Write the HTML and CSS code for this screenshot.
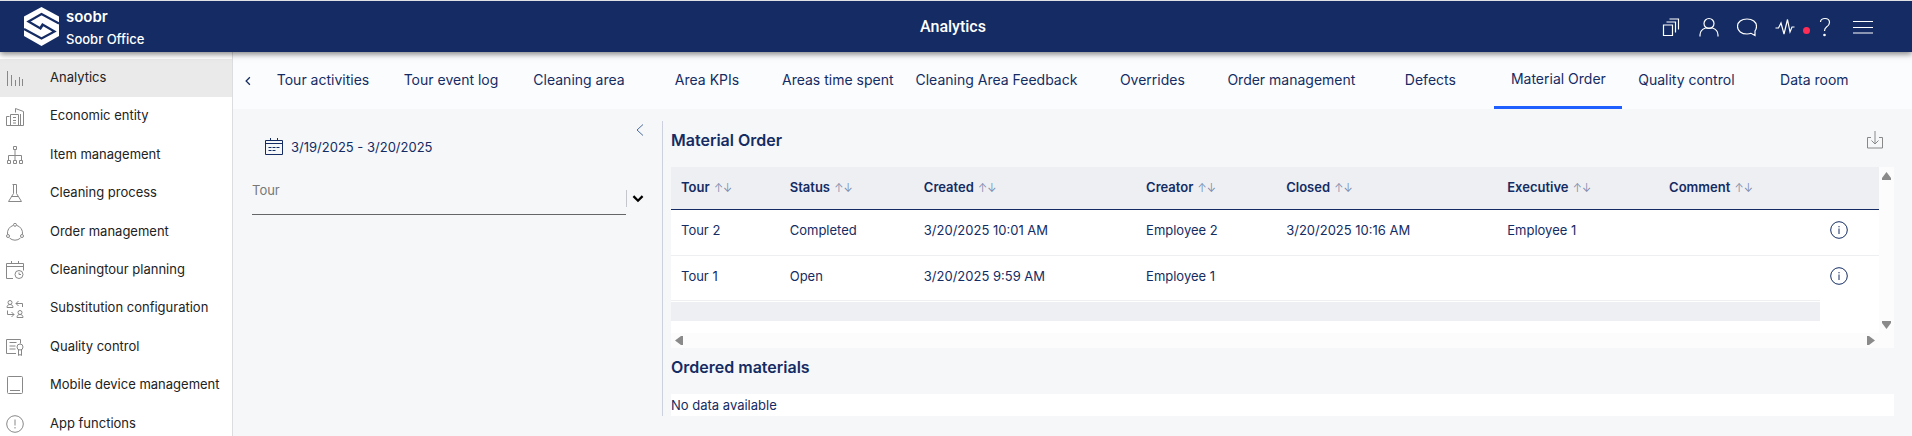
FILE: index.html
```
<!DOCTYPE html>
<html lang="en">
<head>
  <meta charset="UTF-8" />
  <meta name="viewport" content="width=device-width, initial-scale=1.0"/>
  <title>Soobr Office - Analytics</title>
  <link rel="stylesheet" href="styles.css">
</head>
<body>
  <header class="topbar">
    <div class="brand">
      <svg class="logo" viewBox="0 0 35 39">
        <path fill="#fff" d="M17.5 0 35 9.5v19.5L17.5 39 0 29V9.500z"/>
        <path fill="none" stroke="#142c63" stroke-width="2.200" d="M35 16.500 17.500 7 4.500 14.500 16.500 21.500 18.500 18.500M0 22 17.500 31.500 30.500 24.500 18.500 17.500 16.500 20.500"/>
      </svg>
      <div class="brand-text">
        <strong>soobr</strong>
        <span>Soobr Office</span>
      </div>
    </div>
    <h1>Analytics</h1>
    <div class="actions">
      <button aria-label="Windows">
        <svg viewBox="0 0 20 20"><path d="M2.500 8h9v10.500h-9zM5.500 5h9v10.500M8.500 2h9v10.500"/></svg>
      </button>
      <button aria-label="Profile">
        <svg viewBox="0 0 20 20"><circle cx="10" cy="6.500" r="5"/><path d="M1 19.500v-1.500c0-3.500 2.500-6 5.500-7h7c3 1 5.500 3.500 5.500 7v1.500"/></svg>
      </button>
      <button aria-label="Messages">
        <svg viewBox="0 0 20 20"><path d="M18 18.500v-4.500c1-1.500 1.500-2.500 1.500-4.500 0-4.500-4-7.500-9.500-7.500S.500 5 .500 9.500 4.500 17 10 17c1.500 0 3-.300 4-.700z"/></svg>
      </button>
      <button class="activity" aria-label="Activity">
        <svg viewBox="0 0 20 20"><path d="M.500 11h3L6 6l3 11 3.500-14.500L15 15l2-5h2.500"/></svg>
        <span class="dot"></span>
      </button>
      <button class="help" aria-label="Help">
        <svg viewBox="0 0 20 20"><path d="M5.500 5C5.500 3 7.500 1.500 10 1.500s4.500 1.500 4.500 4-1.500 3.500-3 4.500-2 2-2 4"/><circle class="fill" cx="9.500" cy="18" r="1.300"/></svg>
      </button>
      <button class="menu" aria-label="Menu">
        <svg viewBox="0 0 20 20"><path d="M0 4.500h20M0 10.500h20M0 16h20"/></svg>
      </button>
    </div>
  </header>

  <div class="layout">
    <nav class="sidebar">
      <a class="active" href="#">
        <svg viewBox="0 0 18 18"><path d="M1.500 2v15M5.500 6v11M9.500 11v6M13.500 8v9M16.500 10v7"/></svg>
        <span>Analytics</span>
      </a>
      <a href="#">
        <svg viewBox="0 0 18 18"><path d="M.500 17.500v-9h3M4.500 17.500V6.500h8v11M9.500 4.500V.500l8 3v14H.500M14.500 6v11.500M7 9.500h3M7 12.500h3M7 15h3"/></svg>
        <span>Economic entity</span>
      </a>
      <a href="#">
        <svg viewBox="0 0 18 18"><path d="M7.500.500h3v3h-3zM9 3.500v11M2.500 14V9.500h13V14M1.500 14.500h3v3h-3zM7.500 14.500h3v3h-3zM13.500 14.500h3v3h-3z"/></svg>
        <span>Item management</span>
      </a>
      <a href="#">
        <svg viewBox="0 0 18 18"><path d="M6.500.500h4M7.500.500V9.500L2.500 17.500h13L10.500 9.500V.500M5 12.500h7"/></svg>
        <span>Cleaning process</span>
      </a>
      <a href="#">
        <svg viewBox="0 0 18 18"><circle cx="9" cy="1.800" r="1.500"/><circle cx="2" cy="13" r="1.500"/><circle cx="16" cy="13" r="1.500"/><path d="M7 2.500A8 8 0 0 0 1.500 11M11 2.500a8 8 0 0 1 5.500 8.500M3.500 15a8 8 0 0 0 11 0"/></svg>
        <span>Order management</span>
      </a>
      <a href="#">
        <svg viewBox="0 0 18 18"><path d="M7 17.500H.500V2.500h17v7M.500 5.500h17M5.500 0v3M12.500 0v3M13 11.500v2h2"/><circle cx="13" cy="13.500" r="4"/></svg>
        <span>Cleaningtour planning</span>
      </a>
      <a href="#">
        <svg viewBox="0 0 18 18"><circle cx="4" cy="2.500" r="2"/><path d="M1 7.500c0-2 1.200-3 3-3s3 1 3 3zM16.500 7V3.500H10M12.500 1 10 3.500 12.500 6M1.500 10.500V14.500H8M5.500 12 8 14.500 5.500 17"/><circle cx="14" cy="12.500" r="2"/><path d="M11 17.500c0-2 1.200-3 3-3s3 1 3 3z"/></svg>
        <span>Substitution configuration</span>
      </a>
      <a href="#">
        <svg viewBox="0 0 18 18"><path d="M10 15.500H.500V1.500h14v4M3.500 4.500h7M3.500 8h6M3.500 11h6M12.500 11.500v6l1.500-1 1.500 1v-6"/><circle cx="14" cy="9" r="3"/></svg>
        <span>Quality control</span>
      </a>
      <a href="#">
        <svg viewBox="0 0 18 18"><rect x="1.500" y=".500" width="15" height="17" rx="1"/><path d="M4 14.500h10"/></svg>
        <span>Mobile device management</span>
      </a>
      <a href="#">
        <svg viewBox="0 0 18 18"><circle cx="9" cy="9" r="8.300"/><path d="M9 4.500v6M9 12v1.500"/></svg>
        <span>App functions</span>
      </a>
    </nav>

    <main class="content">
      <nav class="tabs">
        <button class="scroll-left" aria-label="Previous tabs">
          <svg viewBox="0 0 8 8"><path d="M5.500 1 2.500 4l3 3"/></svg>
        </button>
        <a href="#">Tour activities</a>
        <a href="#">Tour event log</a>
        <a href="#">Cleaning area</a>
        <a href="#">Area KPIs</a>
        <a href="#">Areas time spent</a>
        <a href="#">Cleaning Area Feedback</a>
        <a href="#">Overrides</a>
        <a href="#">Order management</a>
        <a href="#">Defects</a>
        <a class="active" href="#">Material Order</a>
        <a href="#">Quality control</a>
        <a href="#">Data room</a>
      </nav>

      <div class="panels">
        <section class="filters">
          <button class="collapse" aria-label="Collapse filters">
            <svg viewBox="0 0 8 12"><path d="M7 .500 1 6l6 5.500"/></svg>
          </button>
          <button class="date-range">
            <svg viewBox="0 0 18 18"><path d="M.500 2.500h17v14H.500zM.500 5.500h17M5.500 0v3M12.500 0v3"/><path stroke-dasharray="3 1" d="M3.500 9.500h11M3.500 12.500h8"/></svg>
            <span>3/19/2025 - 3/20/2025</span>
          </button>
          <div class="select-row">
            <select id="tour" aria-label="Tour">
              <option>Tour</option>
            </select>
            <label class="chevron" for="tour">
              <svg viewBox="0 0 10 7"><path d="m1 1 4 4 4-4"/></svg>
            </label>
          </div>
        </section>

        <section class="results">
          <div class="results-head">
            <h2>Material Order</h2>
            <button aria-label="Download">
              <svg viewBox="0 0 16 18"><path d="M4 6.500H.500v10.500h15V6.500H12M8 0v13M4.500 9.500 8 13l3.500-3.500"/></svg>
            </button>
          </div>

          <div class="table-box">
            <div class="table-wrap">
              <table>
                <thead>
                  <tr>
                    <th class="col-tour">Tour <i>↑↓</i></th>
                    <th class="col-status">Status <i>↑↓</i></th>
                    <th class="col-created">Created <i>↑↓</i></th>
                    <th class="col-creator">Creator <i>↑↓</i></th>
                    <th class="col-closed">Closed <i>↑↓</i></th>
                    <th class="col-executive">Executive <i>↑↓</i></th>
                    <th class="col-comment">Comment <i>↑↓</i></th>
                    <th class="col-info"></th>
                  </tr>
                </thead>
                <tbody>
                  <tr>
                    <td>Tour 2</td>
                    <td>Completed</td>
                    <td>3/20/2025 10:01 AM</td>
                    <td>Employee 2</td>
                    <td>3/20/2025 10:16 AM</td>
                    <td>Employee 1</td>
                    <td></td>
                    <td>
                      <button class="info" aria-label="Details">
                        <svg viewBox="0 0 18 18"><circle cx="9" cy="9" r="8.300"/><path d="M9 7.500v5.500M9 5v1.300"/></svg>
                      </button>
                    </td>
                  </tr>
                  <tr>
                    <td>Tour 1</td>
                    <td>Open</td>
                    <td>3/20/2025 9:59 AM</td>
                    <td>Employee 1</td>
                    <td></td>
                    <td></td>
                    <td></td>
                    <td>
                      <button class="info" aria-label="Details">
                        <svg viewBox="0 0 18 18"><circle cx="9" cy="9" r="8.300"/><path d="M9 7.500v5.500M9 5v1.300"/></svg>
                      </button>
                    </td>
                  </tr>
                </tbody>
              </table>
              <div class="table-foot"></div>
            </div>
            <div class="scroll-y">
              <svg viewBox="0 0 9 8"><path d="M4.500 0 9 6v2H0V6z"/></svg>
              <svg viewBox="0 0 9 8"><path d="M4.500 8 9 2V0H0v2z"/></svg>
            </div>
            <div class="scroll-x">
              <svg viewBox="0 0 8 9"><path d="M0 4.500 6 0h2v9H6z"/></svg>
              <svg viewBox="0 0 8 9"><path d="M8 4.500 2 0H0v9h2z"/></svg>
            </div>
          </div>

          <h2>Ordered materials</h2>
          <p class="empty">No data available</p>
        </section>
      </div>
    </main>
  </div>
</body>
</html>
```
FILE: styles.css
```
* {
  box-sizing: border-box;
}

body {
  margin: 0;
  height: 100vh;
  display: flex;
  flex-direction: column;
  overflow: hidden;
  font-family: Inter, sans-serif;
  font-size: 13px;
  color: #142c63;
  background: #f6f7f9;
}

a {
  color: inherit;
  text-decoration: none;
}

button {
  padding: 0;
  border: none;
  background: none;
  font: inherit;
  color: inherit;
  cursor: pointer;
}

svg {
  display: block;
  fill: none;
  stroke: currentColor;
}

/* Top bar */
.topbar {
  display: grid;
  grid-template-columns: 1fr auto 1fr;
  align-items: center;
  height: 52px;
  padding: 0 30px 0 24px;
  border-top: 1px solid #dfe1e5;
  background: #142c63;
  color: #fff;
  box-shadow: 0 2px 6px rgba(0,0,0,0.5);
  z-index: 1;
}

.brand {
  display: flex;
  align-items: center;
  gap: 7px;
}

.logo {
  width: 35px;
  height: 39px;
  stroke: none;
}

.brand-text {
  display: flex;
  flex-direction: column;
  padding-top: 2px;
  font-weight: 500;
  line-height: 23px;
}

.brand-text strong {
  font-size: 15px;
  font-weight: 600;
}

.topbar h1 {
  margin: 0;
  font-family: Roboto, sans-serif;
  font-size: 16px;
  font-weight: 500;
}

.actions {
  display: flex;
  justify-content: flex-end;
  align-items: center;
  gap: 18px;
  padding-right: 9px;
}

.actions svg {
  width: 20px;
  height: 20px;
  stroke-width: 1.2;
}

.actions .fill {
  fill: currentColor;
  stroke: none;
}

.activity {
  display: flex;
  align-items: center;
  gap: 8px;
}

.dot {
  width: 7px;
  height: 7px;
  margin-top: 8px;
  border-radius: 50%;
  background: #ff2d55;
}

.help {
  margin-left: -13px;
}

/* Sidebar */
.layout {
  flex: 1;
  display: flex;
  min-height: 0;
}

.sidebar {
  flex: 0 0 233px;
  padding-top: 7px;
  border-right: 1px solid #dcdde0;
  background: #fff;
  color: #222;
}

.sidebar a {
  display: flex;
  align-items: center;
  gap: 26px;
  padding: 7px 6px 9px;
  font-size: 14px;
  line-height: 1.6em;
}

.sidebar a.active {
  background: #eaeaea;
}

.sidebar span {
  font-size: 13px;
}

.sidebar svg {
  width: 18px;
  height: 18px;
  margin-top: 2px;
  color: #888;
}

/* Tabs */
.content {
  flex: 1;
  min-width: 0;
}

.tabs {
  display: flex;
  height: 57px;
  background: #fbfcfe;
  font-size: 14px;
}

.scroll-left {
  width: 26px;
  padding-left: 10px;
}

.scroll-left svg {
  width: 10px;
  height: 10px;
}

.tabs a {
  display: flex;
  align-items: center;
  justify-content: center;
  min-width: 128px;
  padding: 0 11px 2px;
  white-space: nowrap;
}

.tabs a.active {
  border-bottom: 3px solid #1f5eff;
}

/* Filters */
.panels {
  display: flex;
  padding: 12px 18px 20px 19px;
}

.filters {
  flex: 0 0 411px;
  display: flex;
  flex-direction: column;
  align-items: flex-start;
  padding-right: 18px;
  border-right: 1px solid #cdd0de;
}

.collapse {
  align-self: flex-end;
  padding-top: 3px;
}

.collapse svg {
  width: 8px;
  height: 12px;
  color: #4a6a9a;
}

.date-range {
  display: flex;
  align-items: center;
  gap: 8px;
  padding: 2px 13px;
}

.date-range svg {
  width: 18px;
  height: 18px;
}

.select-row {
  display: flex;
  align-items: center;
  width: 100%;
  margin-top: 16px;
}

.select-row select {
  flex: 1;
  height: 41px;
  padding: 0 0 8px;
  border: none;
  border-bottom: 1px solid #666;
  border-radius: 0;
  background: none;
  appearance: none;
  font: inherit;
  color: #777;
}

.chevron {
  margin-top: 8px;
  padding: 5px 0 4px 5px;
  border-left: 1px solid #c4c6cc;
}

.chevron svg {
  width: 12px;
  height: 8px;
  color: #000;
  stroke-width: 2;
}

/* Results */
.results {
  flex: 1;
  min-width: 0;
  padding-left: 8px;
}

.results-head {
  display: flex;
  align-items: center;
  justify-content: space-between;
  height: 46px;
  padding: 0 11px 8px 0;
}

.results-head svg {
  width: 16px;
  height: 18px;
  color: #888;
}

h2 {
  margin: 0;
  font-size: 16px;
  font-weight: 600;
  line-height: 38px;
}

.table-box {
  display: grid;
  grid-template-columns: 1fr 15px;
  grid-template-rows: auto 15px;
  background: #fcfcfc;
}

.table-wrap {
  padding-bottom: 12px;
  background: #fff;
}

table {
  width: 100%;
  table-layout: fixed;
  border-collapse: separate;
  border-spacing: 0;
}

th, td {
  padding: 0 10px;
  text-align: left;
  white-space: nowrap;
}

th {
  height: 43px;
  padding-bottom: 2px;
  border-bottom: 1px solid #142c63;
  background: #eeeff3;
  font-weight: 600;
}

th i {
  margin-left: 1px;
  font-size: 11px;
  font-style: normal;
  font-weight: 300;
  color: #6f7fa8;
}

td {
  height: 46px;
  padding-bottom: 5px;
  border-bottom: 1px solid #eeeff1;
}

tr:last-child td {
  height: 45px;
}

tr:last-child td:last-child {
  border-bottom: none;
}

.col-tour { width: 9%; }
.col-status { width: 11.1%; }
.col-created { width: 18.4%; }
.col-creator { width: 11.6%; }
.col-closed { width: 18.3%; }
.col-executive { width: 13.4%; }
.col-comment { width: 13.3%; }

.info {
  display: block;
}

.info svg {
  width: 18px;
  height: 18px;
}

.table-foot {
  width: 95.1%;
  height: 19px;
  margin-top: 1px;
  background: #eeeff3;
}

.scroll-y, .scroll-x {
  display: flex;
  align-items: center;
  justify-content: space-between;
}

.scroll-y {
  flex-direction: column;
  padding: 5px 0 4px;
}

.scroll-x {
  padding: 0 4px;
}

.scroll-y svg, .scroll-x svg {
  fill: #8a8a8a;
  stroke: none;
}

.scroll-y svg {
  width: 9px;
  height: 8px;
}

.scroll-x svg {
  width: 8px;
  height: 9px;
}

.empty {
  margin: 8px 0 0;
  background: #fff;
  line-height: 22px;
}
```
